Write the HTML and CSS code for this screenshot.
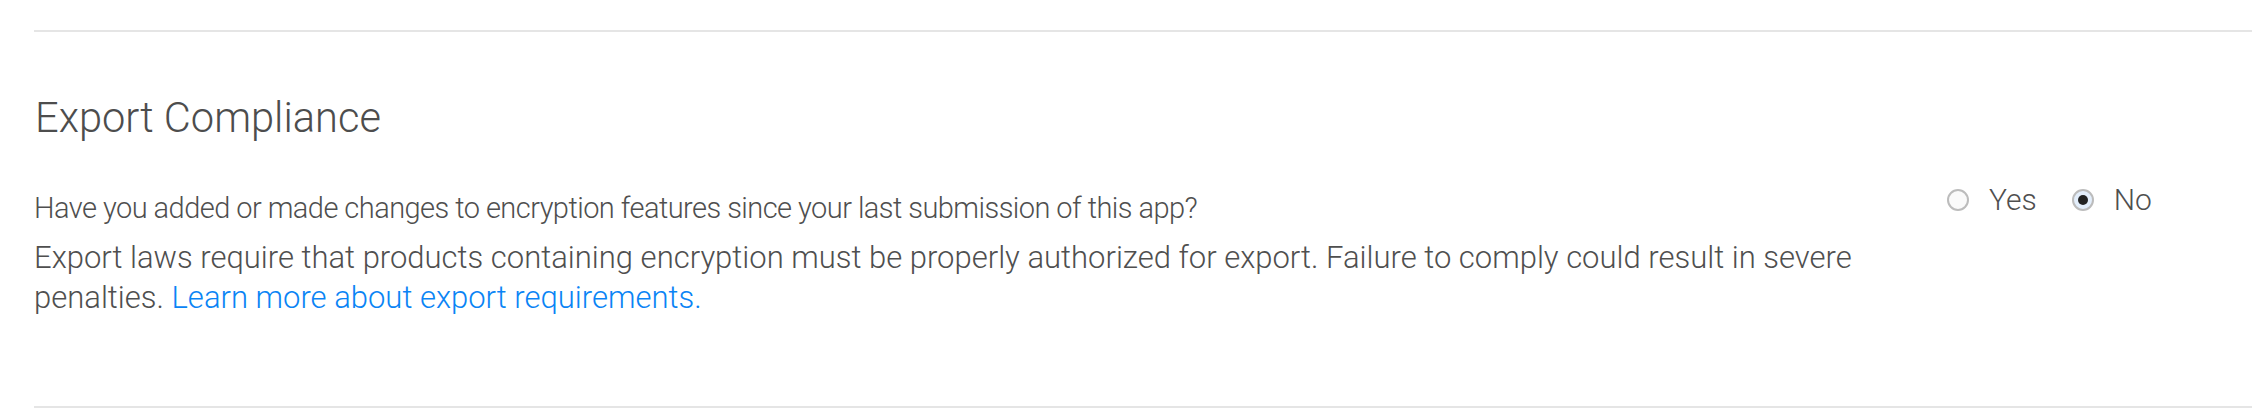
FILE: index.html
```html
<!DOCTYPE html>
<html lang="en">
<head>
    <meta charset="UTF-8">
    <meta name="viewport" content="width=device-width, initial-scale=1.0">
    <title>Export Compliance</title>
    <link rel="stylesheet" href="styles.css">
</head>
<body>

    <div class="section">
        <h2 class="title">Export Compliance</h2>

        <div class="row">
            <div class="text">
                <p class="question">Have you added or made changes to encryption features since your last submission of this app?</p>
                <p class="note">Export laws require that products containing encryption must be properly authorized for export. Failure to comply could result in severe penalties. <a href="#">Learn more about export requirements.</a></p>
            </div>

            <div class="choices">
                <label class="choice"><span class="radio"></span>Yes</label>
                <label class="choice"><span class="radio checked"></span>No</label>
            </div>
        </div>
    </div>

</body>
</html>
```

FILE: styles.css
```css
body {
    font-family: 'Roboto', 'Liberation Sans', sans-serif;
    font-weight: 300;
    margin: 0;
    padding: 0;
    background-color: #fff;
    color: #4f4f4f;
}
.section {
    margin: 30px 0 0 34px;
    height: 378px;
    box-sizing: border-box;
    border-top: 2px solid #e5e5e5;
    border-bottom: 2px solid #e5e5e5;
    padding-top: 61px;
}
.title {
    margin: 0 0 0 1px;
    font-size: 41.6px;
    font-weight: 300;
    line-height: 50px;
    color: #4d4d4d;
}
.row {
    display: flex;
    align-items: flex-start;
    margin-top: 47px;
}
.text {
    width: 1880px;
}
.question {
    margin: 0;
    font-size: 29px;
    line-height: 36px;
    letter-spacing: -0.55px;
}
.note {
    margin: 12px 0 0;
    font-size: 31px;
    line-height: 40px;
}
.note a {
    color: #0a84f5;
    text-decoration: none;
}
.choices {
    display: flex;
    gap: 35px;
    margin: -8px 0 0 33px;
}
.choice {
    display: flex;
    align-items: center;
    gap: 20px;
    font-size: 30px;
    line-height: 36px;
    color: #4f4f4f;
    cursor: pointer;
}
.radio {
    width: 22px;
    height: 22px;
    box-sizing: border-box;
    border-radius: 50%;
    border: 2px solid #bcbcbc;
    background-color: #fafafa;
    display: flex;
    align-items: center;
    justify-content: center;
}
.radio.checked {
    background-color: #e3eefb;
}
.radio.checked::after {
    content: "";
    width: 10px;
    height: 10px;
    border-radius: 50%;
    background-color: #222;
}
```
